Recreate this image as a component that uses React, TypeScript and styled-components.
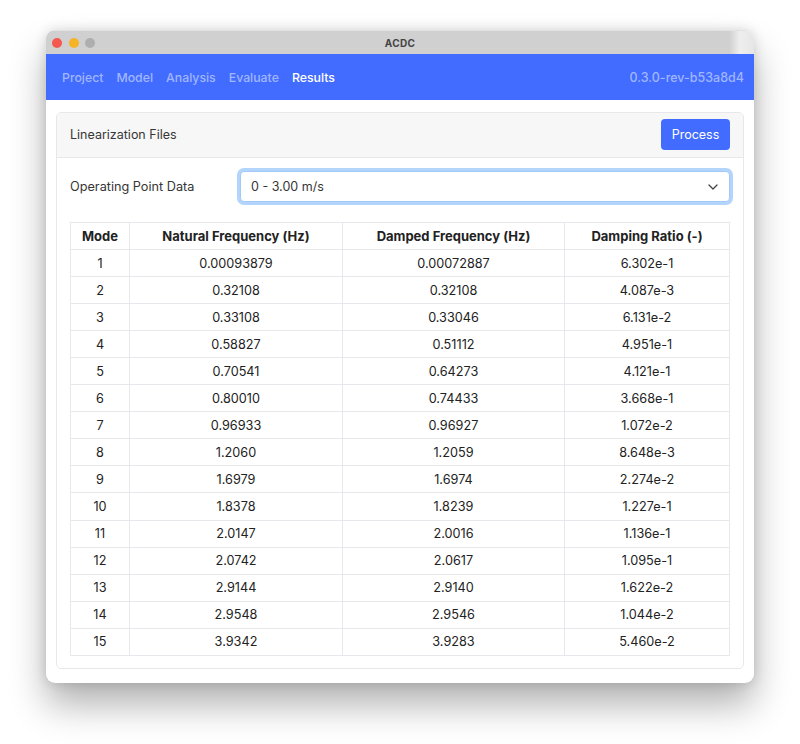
import styled, { createGlobalStyle } from "styled-components";

const GlobalStyle = createGlobalStyle`
  html, body {
    margin: 0;
    padding: 0;
    background-color: #ffffff;
    font-family: Inter, "Liberation Sans", sans-serif;
  }
`;

const Page = styled.div`
  width: 800px;
  height: 744px;
  box-sizing: border-box;
  padding: 30px 46px 0;
  overflow: hidden;
`;

const Window = styled.div`
  width: 708px;
  height: 653px;
  border-radius: 9px;
  overflow: hidden;
  background-color: #ffffff;
  display: flex;
  flex-direction: column;
  box-shadow: 0 22px 36px rgba(0, 0, 0, 0.3), 0 0 12px rgba(0, 0, 0, 0.14);
`;

const TitleBar = styled.div`
  height: 24px;
  flex-shrink: 0;
  box-sizing: border-box;
  display: grid;
  grid-template-columns: 1fr auto 1fr;
  align-items: center;
  padding: 0 6px;
  background: linear-gradient(to right, #d0d0d0 0, #d0d0d0 96.5%, #eeeeee 98%, #e6e6e6 100%);
  border-top: 1px solid #e2e2e2;
`;

const Lights = styled.div`
  display: flex;
  gap: 6.5px;
`;

const Light = styled.span<{ $color: string }>`
  width: 10px;
  height: 10px;
  border-radius: 50%;
  background-color: ${(p) => p.$color};
`;

const WindowTitle = styled.div`
  font-size: 10px;
  font-weight: 700;
  letter-spacing: 0.3px;
  color: #444444;
`;

const NavBar = styled.div`
  height: 46px;
  flex-shrink: 0;
  background-color: #426cff;
  display: flex;
  align-items: center;
  justify-content: space-between;
  padding: 0 10px 0 16px;
  font-size: 12.3px;
  font-weight: 500;
`;

const NavLinks = styled.div`
  display: flex;
  gap: 13px;
`;

const NavLink = styled.span<{ $active?: boolean }>`
  color: ${(p) => (p.$active ? "#ffffff" : "#a0b6ff")};
`;

const Version = styled.span`
  color: #a0b6ff;
  font-size: 12.5px;
`;

const Content = styled.div`
  flex: 1;
  padding: 12px 10px 14px;
`;

const Card = styled.div`
  height: 100%;
  box-sizing: border-box;
  border: 1px solid #e8e8ea;
  border-radius: 5px;
  overflow: hidden;
`;

const CardHeader = styled.div`
  height: 45px;
  box-sizing: border-box;
  display: flex;
  align-items: center;
  justify-content: space-between;
  padding: 0 13px 1px;
  background-color: #f7f7f7;
  border-bottom: 1px solid #e8e8ea;
  font-size: 12.5px;
  color: #363636;
`;

const ProcessButton = styled.button`
  width: 69px;
  height: 31px;
  border: none;
  border-radius: 4px;
  background-color: #426cff;
  color: #ffffff;
  font-family: inherit;
  font-size: 12.5px;
  padding: 0;
`;

const CardBody = styled.div`
  padding: 13px 13px 0;
`;

const FieldRow = styled.div`
  display: flex;
  align-items: center;
  margin-bottom: 20px;
`;

const FieldLabel = styled.label`
  width: 170px;
  font-size: 12.7px;
  color: #363636;
`;

const SelectBox = styled.div`
  flex: 1;
  height: 31px;
  box-sizing: border-box;
  display: flex;
  align-items: center;
  justify-content: space-between;
  padding: 0 10px 0 10px;
  background-color: #ffffff;
  border: 1px solid #a3c9fb;
  border-radius: 4px;
  box-shadow: 0 0 0 3px #b3d4fb;
  font-size: 12.5px;
  color: #363636;
`;

const DataTable = styled.table`
  width: 659px;
  border-collapse: collapse;
  table-layout: fixed;
  font-size: 12.7px;
  color: #222222;
`;

const HeadCell = styled.th`
  height: 26.06px;
  padding: 0;
  border: 1px solid #e7e8ec;
  font-size: 13px;
  font-weight: 700;
  text-align: center;
`;

const Cell = styled.td`
  height: 26.06px;
  padding: 0;
  border: 1px solid #e7e8ec;
  text-align: center;
`;

const columns = [59, 213, 222, 165];
const headers = ["Mode", "Natural Frequency (Hz)", "Damped Frequency (Hz)", "Damping Ratio (-)"];

const rows = [
  [1, "0.00093879", "0.00072887", "6.302e-1"],
  [2, "0.32108", "0.32108", "4.087e-3"],
  [3, "0.33108", "0.33046", "6.131e-2"],
  [4, "0.58827", "0.51112", "4.951e-1"],
  [5, "0.70541", "0.64273", "4.121e-1"],
  [6, "0.80010", "0.74433", "3.668e-1"],
  [7, "0.96933", "0.96927", "1.072e-2"],
  [8, "1.2060", "1.2059", "8.648e-3"],
  [9, "1.6979", "1.6974", "2.274e-2"],
  [10, "1.8378", "1.8239", "1.227e-1"],
  [11, "2.0147", "2.0016", "1.136e-1"],
  [12, "2.0742", "2.0617", "1.095e-1"],
  [13, "2.9144", "2.9140", "1.622e-2"],
  [14, "2.9548", "2.9546", "1.044e-2"],
  [15, "3.9342", "3.9283", "5.460e-2"],
];

const navItems = ["Project", "Model", "Analysis", "Evaluate", "Results"];

const App = () => {
  return (
    <Page>
      <GlobalStyle />
      <Window>
        <TitleBar>
          <Lights>
            <Light $color="#f4584f" />
            <Light $color="#f6b326" />
            <Light $color="#aeaeae" />
          </Lights>
          <WindowTitle>ACDC</WindowTitle>
        </TitleBar>
        <NavBar>
          <NavLinks>
            {navItems.map((item) => (
              <NavLink key={item} $active={item === "Results"}>
                {item}
              </NavLink>
            ))}
          </NavLinks>
          <Version>0.3.0-rev-b53a8d4</Version>
        </NavBar>
        <Content>
          <Card>
            <CardHeader>
              Linearization Files
              <ProcessButton>Process</ProcessButton>
            </CardHeader>
            <CardBody>
              <FieldRow>
                <FieldLabel>Operating Point Data</FieldLabel>
                <SelectBox>
                  0 - 3.00 m/s
                  <svg width="12" height="12" viewBox="0 0 12 12" fill="none">
                    <path d="M2 4l4 4 4-4" stroke="#444" strokeWidth="1.3" strokeLinecap="round" strokeLinejoin="round" />
                  </svg>
                </SelectBox>
              </FieldRow>
              <DataTable>
                <colgroup>
                  {columns.map((w, i) => (
                    <col key={i} width={w} />
                  ))}
                </colgroup>
                <thead>
                  <tr>
                    {headers.map((h) => (
                      <HeadCell key={h}>{h}</HeadCell>
                    ))}
                  </tr>
                </thead>
                <tbody>
                  {rows.map((row) => (
                    <tr key={row[0]}>
                      {row.map((v, i) => (
                        <Cell key={i}>{v}</Cell>
                      ))}
                    </tr>
                  ))}
                </tbody>
              </DataTable>
            </CardBody>
          </Card>
        </Content>
      </Window>
    </Page>
  );
};

export default App;
